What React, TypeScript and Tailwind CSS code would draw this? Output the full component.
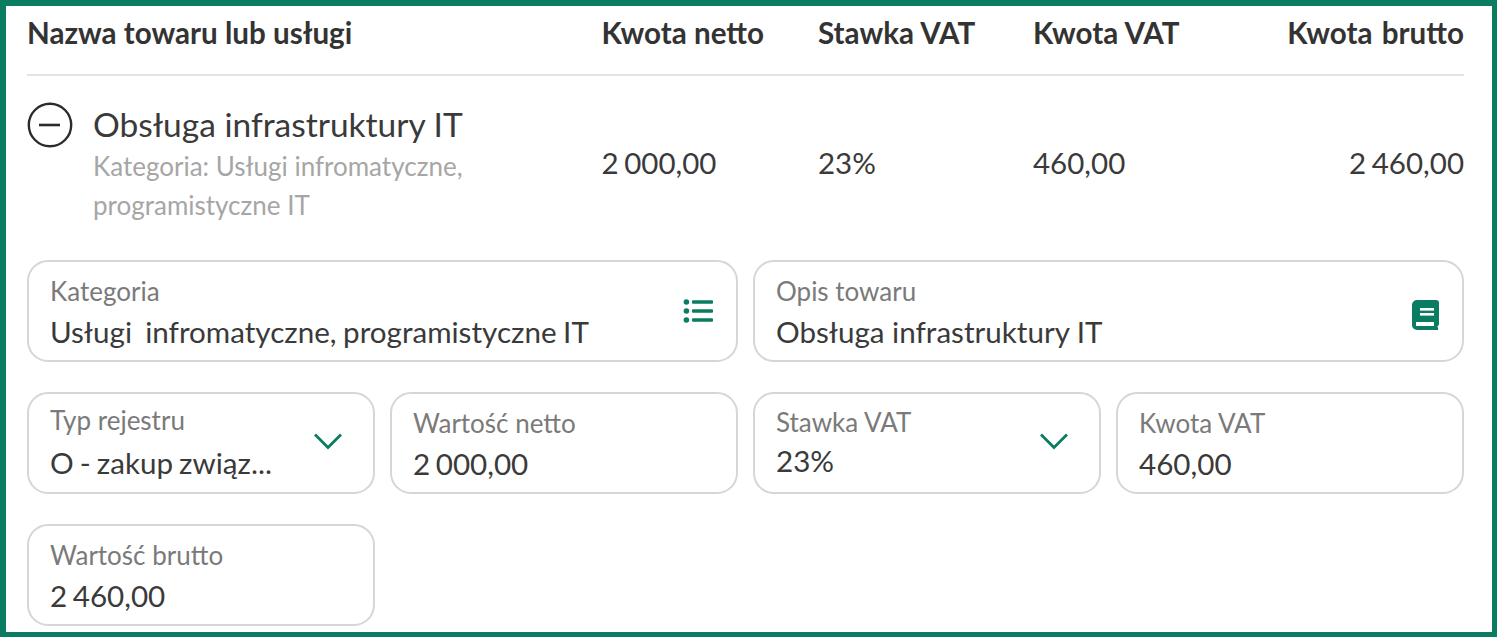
import type { ReactNode } from "react";

const columns = "grid grid-cols-[574.5px_216.5px_215px_1fr]";

const MinusCircle = () => (
  <svg width="46" height="46" viewBox="0 0 46 46" fill="none" stroke="#2b2b2b" className="shrink-0">
    <circle cx="23" cy="23" r="21.2" strokeWidth="2.4" />
    <path d="M12 23h21" strokeWidth="2.6" />
  </svg>
);

const ListIcon = () => (
  <svg width="30" height="26" viewBox="0 0 30 26" fill="#0a7c62">
    <circle cx="3.4" cy="4" r="2.8" />
    <circle cx="3.4" cy="13" r="2.8" />
    <circle cx="3.4" cy="22" r="2.8" />
    <rect x="9" y="2.2" width="21" height="3.6" rx="1" />
    <rect x="9" y="11.2" width="21" height="3.6" rx="1" />
    <rect x="9" y="20.2" width="21" height="3.6" rx="1" />
  </svg>
);

const BookIcon = () => (
  <svg width="27" height="30" viewBox="0 0 27 30" className="mt-[8px]">
    <path d="M5 0h19a3 3 0 0 1 3 3v21c0 1-.6 1.6-1.4 2v1.5c.9.5.9 2.5 0 2.5H5a5 5 0 0 1-5-5V5a5 5 0 0 1 5-5z" fill="#0a7c62" />
    <rect x="8" y="8" width="14" height="2.6" fill="#fff" />
    <rect x="8" y="13" width="14" height="2.6" fill="#fff" />
    <rect x="4" y="22" width="18" height="4" fill="#fff" />
  </svg>
);

const Chevron = () => (
  <svg width="32" height="20" viewBox="0 0 32 20" fill="none" stroke="#0a7c62" strokeWidth="2.8" className="mr-[6px] -mt-[4px] shrink-0">
    <path d="M3 3.5l13 13 13-13" />
  </svg>
);

type FieldProps = {
  label: string;
  value: string;
  icon?: ReactNode;
  span?: string;
  labelClass?: string;
  valueClass?: string;
};

const Field = ({ label, value, icon, span = "", labelClass = "mt-0", valueClass = "mt-[7px] [word-spacing:-2px]" }: FieldProps) => (
  <div className={`h-[102px] min-w-0 rounded-[21px] border-2 border-[#d6d6d6] bg-white pl-[21px] pr-[23px] flex items-center justify-between ${span}`}>
    <div className="min-w-0 flex-1">
      <div className={`text-[26px] leading-[34px] text-[#7a7a7a] ${labelClass}`}>{label}</div>
      <div className={`text-[29.6px] leading-[34px] text-[#3a3a3a] truncate whitespace-pre ${valueClass}`}>{value}</div>
    </div>
    {icon}
  </div>
);

export default function App() {
  return (
    <div className="w-[1497px] h-[637px] border-t-[6px] border-l-[6px] border-r-[5px] border-b-[5px] border-[#0a7c62] bg-white overflow-hidden pl-[21px] pr-[28px] font-['Lato','Open_Sans',sans-serif]">
      <div className={`${columns} h-[70px] items-center border-b-2 border-[#e3e3e3] pb-[14px] text-[29.6px] font-bold text-[#333333]`}>
        <div>Nazwa towaru lub usługi</div>
        <div>Kwota netto</div>
        <div>Stawka VAT</div>
        <div className="flex justify-between">
          <span>Kwota VAT</span>
          <span className="[word-spacing:2px]">Kwota brutto</span>
        </div>
      </div>

      <div className={`${columns} items-center pt-[25px] text-[29.5px] text-[#3a3a3a] [word-spacing:-2px]`}>
        <div className="flex gap-[20px]">
          <div className="pt-[1px]"><MinusCircle /></div>
          <div className="[word-spacing:0]">
            <div className="text-[33.5px] leading-[46px] text-[#3a3a3a]">Obsługa infrastruktury IT</div>
            <div className="w-[400px] text-[26px] leading-[39px] text-[#a6a6a6]">
              Kategoria: Usługi infromatyczne, programistyczne IT
            </div>
          </div>
        </div>
        <div>2 000,00</div>
        <div>23%</div>
        <div className="flex justify-between">
          <span>460,00</span>
          <span>2 460,00</span>
        </div>
      </div>

      <div className="grid grid-cols-4 gap-x-[15px] gap-y-[30px] pt-[35px]">
        <Field span="col-span-2" label="Kategoria" value="Usługi  infromatyczne, programistyczne IT" icon={<ListIcon />} valueClass="mt-[7px] [word-spacing:-1px]" />
        <Field span="col-span-2" label="Opis towaru" value="Obsługa infrastruktury IT" icon={<BookIcon />} valueClass="mt-[7px]" />
        <Field label="Typ rejestru" value="O - zakup związ..." icon={<Chevron />} labelClass="-mt-[3px]" valueClass="mt-[9px] [word-spacing:-1.5px]" />
        <Field label="Wartość netto" value="2 000,00" />
        <Field label="Stawka VAT" value="23%" icon={<Chevron />} labelClass="-mt-[3px]" valueClass="mt-[5px]" />
        <Field label="Kwota VAT" value="460,00" />
        <Field label="Wartość brutto" value="2 460,00" />
      </div>
    </div>
  );
}
